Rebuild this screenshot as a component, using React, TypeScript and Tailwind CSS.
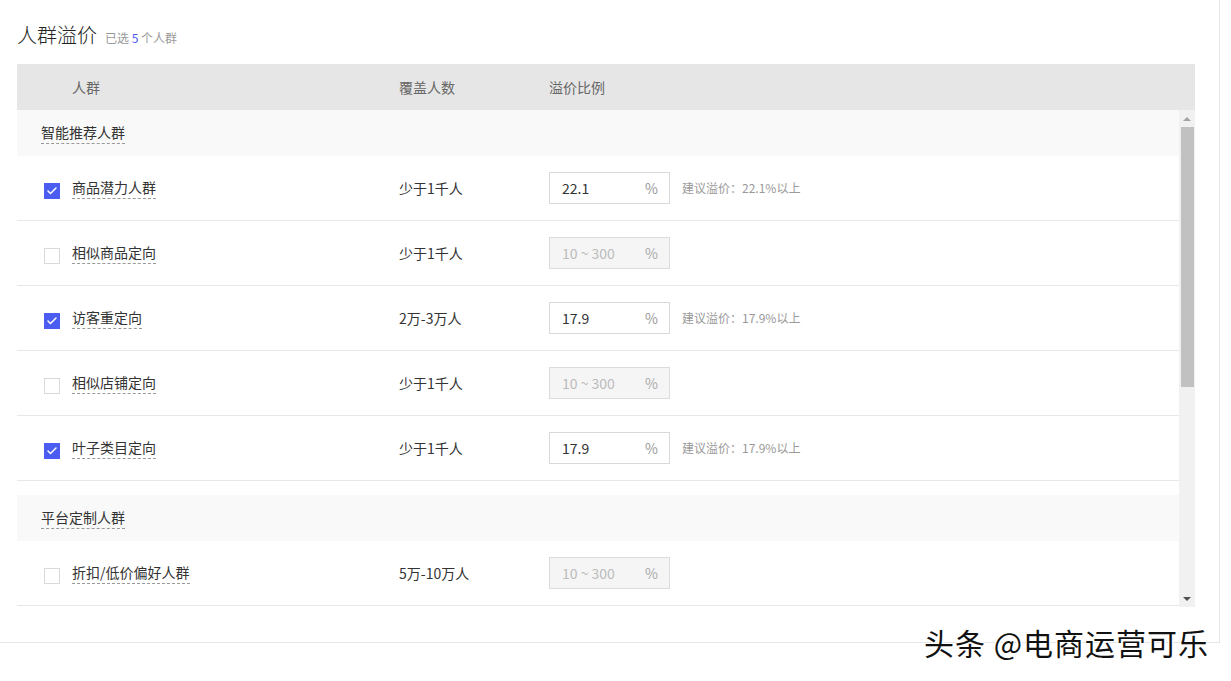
import { Check } from 'lucide-react'

type Row = {
  name: string
  cover: string
  checked: boolean
  value?: string
}

// rows in the two crowd groups
const smartRows: Row[] = [
  { name: '商品潜力人群', cover: '少于1千人', checked: true, value: '22.1' },
  { name: '相似商品定向', cover: '少于1千人', checked: false },
  { name: '访客重定向', cover: '2万-3万人', checked: true, value: '17.9' },
  { name: '相似店铺定向', cover: '少于1千人', checked: false },
  { name: '叶子类目定向', cover: '少于1千人', checked: true, value: '17.9' },
]

const platformRows: Row[] = [
  { name: '折扣/低价偏好人群', cover: '5万-10万人', checked: false },
]

function GroupRow({ title }: { title: string }) {
  return (
    <div className="h-[46px] bg-[#f9f9f9] flex items-center pl-[24px]">
      <span className="text-[14px] leading-[20px] text-[#333] border-b border-dashed border-[#999] pb-[1px]">
        {title}
      </span>
    </div>
  )
}

function CrowdRow({ row }: { row: Row }) {
  return (
    <div className="h-[65px] border-b border-[#e8e8e8] flex items-center text-[14px] text-[#333]">
      <div className="w-[55px] pl-[27px] flex items-center pt-[5px]">
        {row.checked ? (
          <span className="w-[16px] h-[16px] bg-[#4b5cf0] flex items-center justify-center">
            <Check className="w-[12px] h-[12px] text-white" strokeWidth={3} />
          </span>
        ) : (
          <span className="w-[16px] h-[16px] border border-[#d9d9d9] bg-white" />
        )}
      </div>
      <div className="w-[327px] flex items-center">
        <span className="leading-[20px] border-b border-dashed border-[#999] pb-[1px]">
          {row.name}
        </span>
      </div>
      <div className="w-[150px] leading-[20px]">{row.cover}</div>
      <div className="flex items-center">
        {row.value ? (
          <div className="w-[121px] h-[32px] border border-[#d9d9d9] bg-white flex items-center justify-between pl-[12px] pr-[11px]">
            <span className="text-[#333]">{row.value}</span>
            <span className="text-[#999]">%</span>
          </div>
        ) : (
          <div className="w-[121px] h-[32px] border border-[#dcdcdc] bg-[#f5f5f5] flex items-center justify-between pl-[12px] pr-[11px]">
            <span className="text-[#bbb]">10 ~ 300</span>
            <span className="text-[#aaa]">%</span>
          </div>
        )}
        {row.value && (
          <span className="ml-[12px] text-[12px] text-[#999]">建议溢价：{row.value}%以上</span>
        )}
      </div>
    </div>
  )
}

export default function App() {
  return (
    <div className="relative w-[1231px] h-[681px] bg-white font-['Noto_Sans_CJK_SC','Microsoft_YaHei',sans-serif]">
      <div className="w-[1220px] h-[643px] border-r border-b border-[#e6e6e6] pl-[17px]">
        {/* title */}
        <div className="h-[64px] pt-[6px] flex items-center">
          <div className="flex items-baseline">
            <span className="text-[20px] leading-[28px] font-light text-[#222]">人群溢价</span>
            <span className="ml-[8px] text-[12px] text-[#999]">
              已选 <span className="text-[#4b5cf0]">5</span> 个人群
            </span>
          </div>
        </div>

        {/* table header */}
        <div className="w-[1178px] h-[46px] bg-[#e6e6e6] flex items-center text-[14px] text-[#666]">
          <div className="w-[382px] pl-[55px]">人群</div>
          <div className="w-[150px]">覆盖人数</div>
          <div>溢价比例</div>
        </div>

        {/* scroll body */}
        <div className="w-[1178px] h-[497px] flex">
          <div className="w-[1162px] overflow-hidden">
            <GroupRow title="智能推荐人群" />
            {smartRows.map((r) => (
              <CrowdRow key={r.name} row={r} />
            ))}
            <div className="h-[14px]" />
            <GroupRow title="平台定制人群" />
            {platformRows.map((r) => (
              <CrowdRow key={r.name} row={r} />
            ))}
          </div>
          <div className="w-[16px] bg-[#f1f1f1] flex flex-col items-center">
            <div className="h-[17px] flex items-center justify-center">
              <span className="w-0 h-0 border-l-[4px] border-r-[4px] border-b-[4px] border-l-transparent border-r-transparent border-b-[#a3a3a3]" />
            </div>
            <div className="w-[13px] h-[260px] bg-[#c1c1c1]" />
            <div className="flex-1" />
            <div className="h-[16px] flex items-center justify-center">
              <span className="w-0 h-0 border-l-[4px] border-r-[4px] border-t-[4px] border-l-transparent border-r-transparent border-t-[#505050]" />
            </div>
          </div>
        </div>
      </div>

      {/* watermark */}
      <div className="absolute left-[924px] top-[622px] text-[30px] leading-[40px] tracking-[1px] text-[#111] font-['Noto_Sans_CJK_SC',sans-serif] [text-shadow:1px_1px_0_#fff,-1px_-1px_0_#fff,1px_-1px_0_#fff,-1px_1px_0_#fff]">
        头条 @电商运营可乐
      </div>
    </div>
  )
}
